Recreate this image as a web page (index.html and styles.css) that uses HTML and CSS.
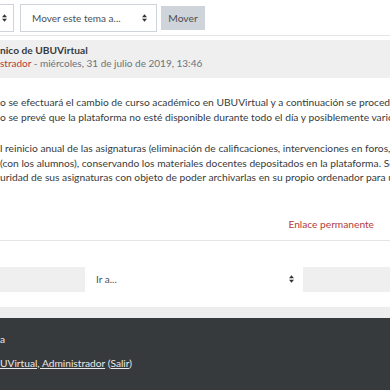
FILE: index.html
```html
<!DOCTYPE html>
<html lang="es">
<head>
  <meta charset="UTF-8">
  <title>Foro UBUVirtual</title>
  <link rel="stylesheet" href="styles.css">
</head>
<body>
  <div class="toolbar">
    <div class="select select-cut">
      <svg class="arrows" viewBox="0 0 6 9" width="6" height="9"><path d="M3 0L6 3.5H0Z M3 9L6 5.5H0Z" fill="#333"/></svg>
    </div>
    <div class="select select-move">Mover este tema a...
      <svg class="arrows" viewBox="0 0 6 9" width="6" height="9"><path d="M3 0L6 3.5H0Z M3 9L6 5.5H0Z" fill="#333"/></svg>
    </div>
    <button class="btn-move">Mover</button>
  </div>

  <div class="post">
    <div class="post-header">
      <div class="post-title">nico de UBUVirtual</div>
      <div class="post-author"><a href="#">strador</a> - miércoles, 31 de julio de 2019, 13:46</div>
    </div>

    <div class="post-body">
      <p>o se efectuará el cambio de curso académico en UBUVirtual y a continuación se procederá<br>
      o se prevé que la plataforma no esté disponible durante todo el día y posiblemente varios días</p>
      <p>l reinicio anual de las asignaturas (eliminación de calificaciones, intervenciones en foros, entregas<br>
      (con los alumnos), conservando los materiales docentes depositados en la plataforma. Se recomienda<br>
      uridad de sus asignaturas con objeto de poder archivarlas en su propio ordenador para uso</p>
    </div>

    <div class="post-links"><a href="#">Enlace permanente</a></div>
  </div>

  <div class="jump">
    <div class="jump-row">
      <div class="select select-jump">Ir a...
        <svg class="arrows" viewBox="0 0 6 9" width="6" height="9"><path d="M3 0L6 3.5H0Z M3 9L6 5.5H0Z" fill="#333"/></svg>
      </div>
    </div>
  </div>

  <footer>
    <div class="footer-line">a</div>
    <div class="footer-line"><a href="#">UVirtual, Administrador</a> (<a href="#">Salir</a>)</div>
  </footer>
</body>
</html>
```

FILE: styles.css
```css
body {
  margin: 0;
  font-family: Lato, "Liberation Sans", sans-serif;
  font-size: 10px;
  color: #373a3c;
  background-color: #fff;
  overflow: hidden;
  white-space: nowrap;
}

a {
  color: #b23b3b;
  text-decoration: none;
}

.toolbar {
  display: flex;
  align-items: center;
  height: 35px;
  border-bottom: 1px solid #e3e6e8;
}

.select {
  display: flex;
  align-items: center;
  box-sizing: border-box;
  height: 28px;
  border: 1px solid #ced4da;
  background-color: #fff;
  color: #495057;
  font-size: 10px;
}

.arrows {
  margin-left: auto;
  width: 5px;
  height: 8px;
}

.select-cut {
  width: 14px;
  border-left: none;
  padding-right: 6px;
}

.select-move {
  width: 137px;
  margin-left: 6px;
  padding: 0 9px 0 11px;
}

.btn-move {
  margin-left: 4px;
  width: 44px;
  height: 24px;
  border: none;
  background-color: #ced4da;
  color: #4b4f54;
  font-family: inherit;
  font-size: 10.3px;
  padding: 0;
}

.post-header {
  margin-top: 4px;
  background-color: #efefef;
  padding: 4px 0 8px;
}

.post-title,
.post-author {
  line-height: 13px;
}

.post-title {
  font-weight: bold;
  font-size: 10.2px;
}

.post-author {
  color: #6a737b;
  font-size: 10px;
}

.post-body {
  padding-top: 17px;
  font-size: 10.25px;
}

.post-body p {
  margin: 0 0 17px;
  line-height: 14.5px;
}

.post-links {
  text-align: right;
  padding: 15px 16px 9px 0;
  line-height: 14px;
  font-size: 10.2px;
  border-bottom: 1px solid #e3e6e8;
}

.jump {
  padding: 26px 0 15px;
  border-bottom: 11px solid #ededed;
}

.jump-row {
  display: flex;
  justify-content: center;
  background-color: #efefef;
}

.select-jump {
  width: 218px;
  height: 25px;
  margin-left: -2px;
  border: none;
  padding: 0 9px 0 11px;
}

footer {
  background-color: #373a3c;
  color: #e8e8e8;
  height: 72px;
  padding-top: 14px;
  box-sizing: border-box;
  font-size: 10.2px;
}

.footer-line {
  line-height: 14px;
  margin-bottom: 10px;
}

footer a {
  color: #e8e8e8;
  text-decoration: underline;
}
```
